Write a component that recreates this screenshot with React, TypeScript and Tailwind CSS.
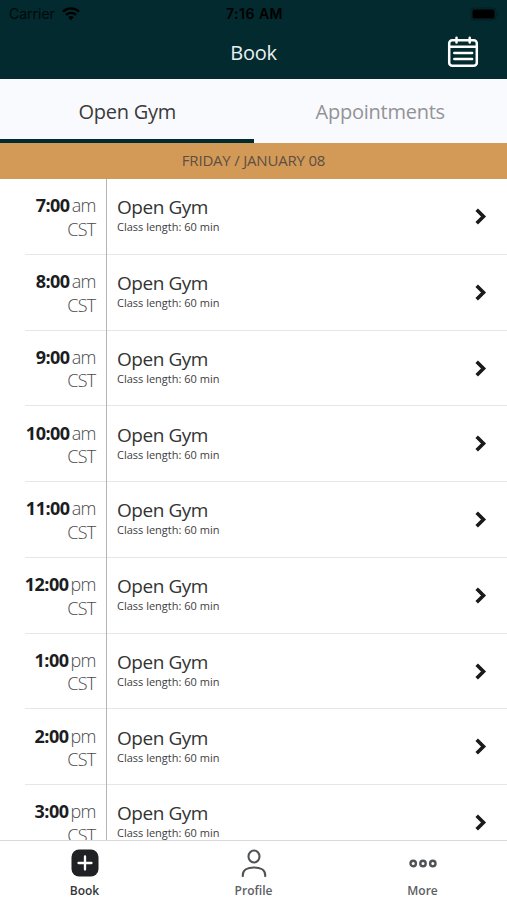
interface Slot { time: string; period: string; title: string; minutes: number }

const SLOTS: Slot[] = [
  { time: '7:00', period: 'am', title: 'Open Gym', minutes: 60 },
  { time: '8:00', period: 'am', title: 'Open Gym', minutes: 60 },
  { time: '9:00', period: 'am', title: 'Open Gym', minutes: 60 },
  { time: '10:00', period: 'am', title: 'Open Gym', minutes: 60 },
  { time: '11:00', period: 'am', title: 'Open Gym', minutes: 60 },
  { time: '12:00', period: 'pm', title: 'Open Gym', minutes: 60 },
  { time: '1:00', period: 'pm', title: 'Open Gym', minutes: 60 },
  { time: '2:00', period: 'pm', title: 'Open Gym', minutes: 60 },
  { time: '3:00', period: 'pm', title: 'Open Gym', minutes: 60 },
]

export default function App() {
  return (
    <div className="flex h-[900px] w-[507px] flex-col overflow-hidden bg-white font-['Open_Sans',sans-serif] text-[#333]">
      <header className="h-[79px] shrink-0 bg-[#032a2e]">
        <StatusBar />
        <div className="grid h-[48px] grid-cols-[1fr_auto_1fr] items-center pr-[28px]">
          <span />
          <h1 className="pt-px pl-[28px] text-[20px] leading-[26px] tracking-[-0.3px] text-[#e9f0f1]">Book</h1>
          <button className="justify-self-end" aria-label="Calendar"><CalendarIcon /></button>
        </div>
      </header>

      <nav className="grid h-[64px] shrink-0 grid-cols-2 bg-[#f9fafd] text-[20px] tracking-[-0.25px]">
        <button className="border-b-4 border-[#032a2e] pt-[5px] pl-px text-[#3a3a3c]">Open Gym</button>
        <button className="border-b-4 border-transparent pt-[5px] text-[#939398]">Appointments</button>
      </nav>

      <div className="flex h-[36px] shrink-0 items-center justify-center bg-[#d39957] pb-px text-[15px] tracking-[-0.2px] text-[#5c4f44]">
        FRIDAY / JANUARY 08
      </div>

      <main className="min-h-0 flex-1 overflow-hidden">
        {SLOTS.map(s => <SlotRow key={s.time} slot={s} />)}
      </main>

      <footer className="grid h-[60px] shrink-0 grid-cols-3 border-t border-[#d9d9d9] bg-white text-[12px] font-semibold text-[#5d6063]">
        <TabItem label="Book" active><BookIcon /></TabItem>
        <TabItem label="Profile"><ProfileIcon /></TabItem>
        <TabItem label="More"><MoreIcon /></TabItem>
      </footer>
    </div>
  )
}

function StatusBar() {
  return (
    <div className="grid h-[28px] grid-cols-3 items-center pr-[7px] pb-px pl-[9px] font-[Inter,sans-serif] text-[14px] text-black">
      <div className="flex items-center gap-[7px] text-[#01090a]">
        Carrier
        <svg width="18" height="14" viewBox="0 0 18 14" fill="none" stroke="#000" strokeWidth="2.4">
          <path d="M1 4.7a11.4 11.4 0 0 1 16 0" />
          <path d="M4 7.9a7.2 7.2 0 0 1 10 0" />
          <path d="M6.3 10.2a3.9 3.9 0 0 1 5.4 0L9 13.2Z" fill="#000" stroke="none" />
        </svg>
      </div>
      <span className="text-center font-semibold tracking-[0.5px]">7:16 AM</span>
      <svg className="justify-self-end" width="30" height="14" viewBox="0 0 30 14">
        <rect x="1" y="1" width="25" height="12" rx="3" fill="none" stroke="#021d20" />
        <rect x="2.5" y="2.5" width="22" height="9" rx="1.5" fill="#000" />
        <path d="M27.5 5v4c1.5-.6 1.5-3.4 0-4Z" fill="#021d20" />
      </svg>
    </div>
  )
}

function SlotRow({ slot }: { slot: Slot }) {
  return (
    <div className="flex h-[75.75px]">
      <div className="w-[25px] shrink-0" />
      <div className="flex flex-1 border-b border-[#e6e6e6]">
        <div className="-mb-px w-[82px] shrink-0 border-r border-[#b5b5b5] pt-[15.3px] pr-[10.5px] text-right text-[18px] leading-[23.5px] font-light tracking-[-0.5px] whitespace-nowrap text-[#4a4a4a]">
          <div className="-ml-2"><b className="font-bold text-[#1c1d1f]">{slot.time}</b><span className="ml-[2px] tracking-[-0.8px]">{slot.period}</span></div>
          <div className="tracking-[-0.7px]">CST</div>
        </div>
        <div className="flex-1 pt-[16.3px] pl-[10px]">
          <h2 className="text-[19px] leading-[25px] tracking-[-0.45px] text-[#333]">{slot.title}</h2>
          <p className="text-[11px] leading-[14px] text-[#404040]">Class length: {slot.minutes} min</p>
        </div>
        <svg className="mt-[29px] mr-[20px]" width="12" height="17" viewBox="0 0 12 17" fill="none" stroke="#1a1a1c" strokeWidth="3.6">
          <path d="M1.7 1.8 8.5 8.5 1.7 15.2" />
        </svg>
      </div>
    </div>
  )
}

function TabItem({ label, active, children }: { label: string; active?: boolean; children: React.ReactNode }) {
  return (
    <button className={`flex flex-col items-center pt-[8px] ${active ? 'text-[#333537]' : ''}`}>
      {children}
      <span className="mt-[5px] leading-[18px]">{label}</span>
    </button>
  )
}

function CalendarIcon() {
  return (
    <svg width="32" height="32" viewBox="0 0 32 32" fill="none" stroke="#fff" strokeWidth="2.5" strokeLinecap="round">
      <rect x="2.2" y="4.2" width="27.6" height="25.6" rx="3" />
      <path d="M2.2 10.8h27.6M9.5 1.7v4.8M22.7 1.7v4.8M7.3 17h17.8M7.3 23h17.8" />
    </svg>
  )
}

function BookIcon() {
  return (
    <svg width="28" height="28" viewBox="0 0 28 28">
      <rect x="0.5" y="0.5" width="27" height="27" rx="7.5" fill="#1f2124" />
      <path d="M14 7.5v13M7.5 14h13" stroke="#fff" strokeWidth="2.3" strokeLinecap="round" />
    </svg>
  )
}

function ProfileIcon() {
  return (
    <svg width="28" height="28" viewBox="0 0 28 28" fill="none" stroke="#505356" strokeWidth="2.1" strokeLinecap="round">
      <ellipse cx="14" cy="7.5" rx="5.5" ry="6" />
      <path d="M2.8 27v-1c0-4.8 4.5-7.5 11.2-7.5s11.2 2.7 11.2 7.5v1" />
    </svg>
  )
}

function MoreIcon() {
  return (
    <svg width="28" height="28" viewBox="0 0 28 28" fill="none" stroke="#505356" strokeWidth="2.4">
      <circle cx="4.2" cy="14.5" r="2.7" />
      <circle cx="14" cy="14.5" r="2.7" />
      <circle cx="23.8" cy="14.5" r="2.7" />
    </svg>
  )
}
